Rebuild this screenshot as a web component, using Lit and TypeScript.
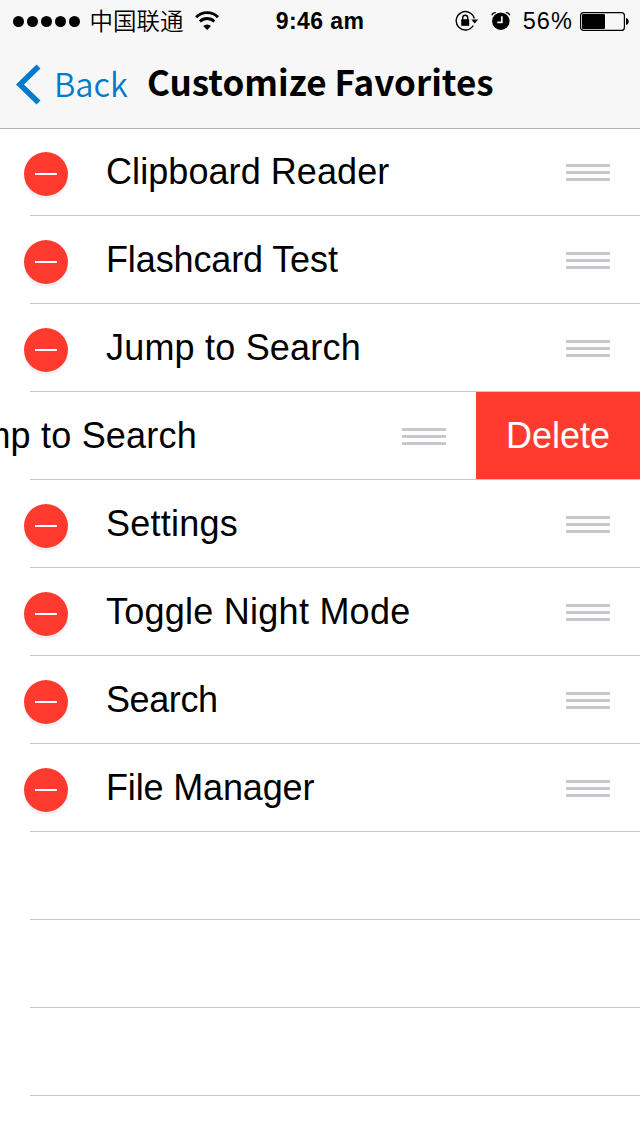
import { LitElement, html, css, svg } from "lit";
import { customElement, property } from "lit/decorators.js";

@customElement("status-bar")
class StatusBar extends LitElement {
  static styles = css`
    :host { display: grid; grid-template-columns: 1fr auto 1fr; height: 40px; align-items: center; color: #000; font: 23.5px/40px "Liberation Sans", "Noto Sans CJK SC", sans-serif; }
    svg { display: block; flex: none; }
    .left, .right { display: flex; align-items: center; height: 40px; }
    .left { padding-left: 13px; }
    .right { justify-content: flex-end; padding-right: 11px; }
    .carrier { font: 350 23.5px/40px "Noto Sans CJK SC", sans-serif; margin: -2px 10px 0 8.5px; }
    .time { font-weight: 700; font-size: 23px; letter-spacing: 0.4px; padding: 1px 0 0; }
    .alarm { margin-left: 12px; }
    .percent { margin: 1px 7px 0 12px; letter-spacing: 1.1px; }
  `;

  render() {
    return html`
      <div class="left">
        <svg width="68" height="40" viewBox="0 0 68 40">
          ${[0, 1, 2, 3, 4].map((i) => svg`<circle cx=${5.5 + i * 14} cy="20.5" r="5.5" />`)}
        </svg>
        <span class="carrier">中国联通</span>
        <svg width="26" height="40" viewBox="0 0 26 40" fill="none" stroke="#000" stroke-width="2.8">
          <path d="M2.2 16.2A15.5 15.5 0 0 1 24 16.2" />
          <path d="M5.9 20.4A10.4 10.4 0 0 1 20.3 20.4" />
          <path d="M13.1 29L9.2 25A6.2 6.2 0 0 1 17 25Z" fill="#000" stroke="none" />
        </svg>
      </div>
      <span class="time">9:46 am</span>
      <div class="right">
        <svg width="24" height="40" viewBox="0 0 24 40">
          <path d="M18.3 24.5A9.2 9.2 0 1 1 19.3 17.5" fill="none" stroke="#000" stroke-width="1.4" />
          <path d="M16.2 18.6H23.2L19.7 22.6Z" />
          <rect x="6.2" y="18.2" width="8" height="6.6" />
          <path d="M7.7 19V16.8A2.5 2.5 0 0 1 12.7 16.8V19" fill="none" stroke="#000" stroke-width="1.4" />
        </svg>
        <svg class="alarm" width="20" height="40" viewBox="0 0 20 40">
          <circle cx="9.8" cy="20.2" r="8.7" />
          <path d="M0.8 14.2C1.4 12.6 2.8 11.6 4.8 11.7M14.8 11.7C16.8 11.6 18.2 12.6 18.8 14.2" fill="none" stroke="#000" stroke-width="1.3" />
          <path d="M10.8 15.3V21.3H6.3" fill="none" stroke="#f7f7f7" stroke-width="1.7" />
        </svg>
        <span class="percent">56%</span>
        <svg width="49" height="40" viewBox="0 0 49 40">
          <rect x="0.6" y="11.6" width="43.8" height="17.8" rx="3" fill="none" stroke="#000" stroke-width="1.2" />
          <rect x="2" y="13" width="23" height="15" rx="1" />
          <path d="M46 17C49.6 17.6 49.6 23.4 46 24Z" />
        </svg>
      </div>
    `;
  }
}

@customElement("nav-bar")
class NavBar extends LitElement {
  static styles = css`
    :host { display: flex; align-items: flex-start; height: 88px; padding-left: 16px; font-family: "Noto Sans CJK SC", "Noto Sans", sans-serif; }
    .chevron { display: block; margin-top: 24px; flex: none; }
    .back { color: #007ac9; font-size: 32.7px; line-height: 48px; font-weight: 350; margin: 19px 0 0 12px; width: 93px; white-space: nowrap; flex: none; }
    .title { margin: 17px 0 0; font-size: 35px; line-height: 48px; font-weight: 700; white-space: nowrap; flex: none; }
  `;

  render() {
    return html`
      <svg class="chevron" width="26" height="41" viewBox="0 0 26 41">
        <path d="M22.5 2.5L4 20.5L22.5 38.5" fill="none" stroke="#007ac9" stroke-width="5.6" />
      </svg>
      <span class="back">Back</span>
      <h1 class="title">Customize Favorites</h1>
    `;
  }
}

@customElement("favorite-row")
class FavoriteRow extends LitElement {
  @property() label = "";
  @property({ type: Number }) tracking = 0;
  @property({ type: Boolean, reflect: true }) swiped = false;

  static styles = css`
    :host { display: flex; height: 88px; overflow: hidden; box-sizing: border-box; background: linear-gradient(#c8c7cc, #c8c7cc) 30px 87px / 610px 1px no-repeat; }
    .content { display: flex; align-items: flex-start; width: 640px; flex: none; height: 87px; box-sizing: border-box; padding: 0 30px 0 24px; }
    :host([swiped]) .content { margin-left: -164px; }
    .minus { display: flex; align-items: center; justify-content: center; width: 44px; height: 44px; margin-top: 24px; border-radius: 50%; background: #ff3b30; box-shadow: 0 4px 1px -0.5px #f2f2f2; }
    .minus::after { content: ""; width: 22px; height: 2px; background: #fff; }
    .label { font: 36px/42px "Liberation Sans", sans-serif; margin: 23px 0 0 38px; flex: 1; white-space: nowrap; color: #000; }
    .handle { display: flex; flex-direction: column; gap: 4px; width: 44px; margin-top: 36px; }
    .handle i { height: 3px; background: #c7c7cc; }
    .delete { width: 164px; height: 87px; flex: none; background: #ff3b30; color: #fff; text-align: center; font: 36px/88px "Liberation Sans", sans-serif; }
  `;

  render() {
    return html`
      <div class="content">
        <span class="minus"></span>
        <span class="label" style="letter-spacing:${this.tracking}px">${this.label}</span>
        <span class="handle"><i></i><i></i><i></i></span>
      </div>
      ${this.swiped ? html`<div class="delete">Delete</div>` : ""}
    `;
  }
}

@customElement("app-root")
class AppRoot extends LitElement {
  static styles = css`
    :host { display: flex; flex-direction: column; width: 640px; height: 1136px; overflow: hidden; background: #fff; }
    header { flex: none; background: #f7f7f7; border-bottom: 1px solid #b2b2b2; margin-bottom: -1px; }
    favorite-row { flex: none; }
    .empty { flex: none; height: 87px; margin-left: 30px; border-bottom: 1px solid #c8c7cc; }
  `;

  private rows = [
    { label: "Clipboard Reader", tracking: 0.07 },
    { label: "Flashcard Test", tracking: -0.12 },
    { label: "Jump to Search", tracking: 0.2 },
    { label: "Jump to Search", tracking: 0.2, swiped: true },
    { label: "Settings", tracking: 0.25 },
    { label: "Toggle Night Mode", tracking: 0.25 },
    { label: "Search", tracking: -0.4 },
    { label: "File Manager", tracking: -0.15 },
  ];

  render() {
    return html`
      <header>
        <status-bar></status-bar>
        <nav-bar></nav-bar>
      </header>
      ${this.rows.map((r) => html`<favorite-row .label=${r.label} .tracking=${r.tracking} .swiped=${!!r.swiped}></favorite-row>`)}
      ${[0, 1, 2].map(() => html`<div class="empty"></div>`)}
    `;
  }
}
